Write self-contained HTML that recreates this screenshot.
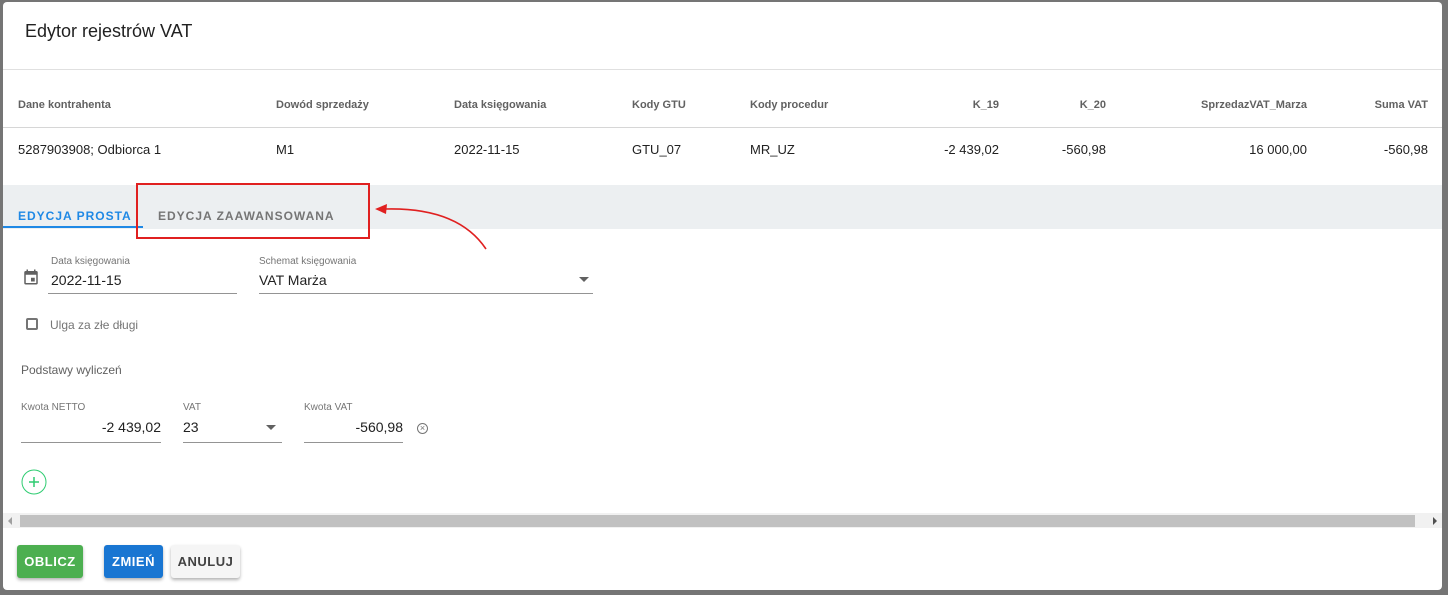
<!DOCTYPE html>
<html><head><meta charset="utf-8"><style>
*{box-sizing:border-box;margin:0;padding:0}
body{width:1448px;height:595px;background:#757575;font-family:"Liberation Sans",sans-serif;position:relative;overflow:hidden;color:#212121}
.box{position:absolute;left:3px;top:2px;width:1439px;height:588px;background:#fff;border-radius:4px;overflow:hidden}
.a{position:absolute;white-space:nowrap}
.h{font-size:11px;color:#616161;font-weight:bold;top:97px}
.d{font-size:13px;color:#212121;top:140px}
.r{text-align:right}
.lab{font-size:10px;color:#757575}
.btn{position:absolute;top:543px;height:33px;border-radius:3px;font-size:13px;font-weight:bold;letter-spacing:.5px;display:flex;align-items:center;justify-content:center;box-shadow:0 2px 3px rgba(0,0,0,.3)}
</style></head><body>
<div class="box">
<div class="a" style="left:22px;top:19px;font-size:18px;color:#212121">Edytor rejestrów VAT</div>
<div class="a" style="left:0;top:67px;width:1439px;height:1px;background:#e0e0e0"></div>
<div class="a h" style="left:15px">Dane kontrahenta</div>
<div class="a h" style="left:273px">Dowód sprzedaży</div>
<div class="a h" style="left:451px">Data księgowania</div>
<div class="a h" style="left:629px">Kody GTU</div>
<div class="a h" style="left:747px">Kody procedur</div>
<div class="a h r" style="right:443px">K_19</div>
<div class="a h r" style="right:336px">K_20</div>
<div class="a h r" style="right:135px">SprzedazVAT_Marza</div>
<div class="a h r" style="right:14px">Suma VAT</div>
<div class="a" style="left:0;top:125px;width:1439px;height:1px;background:#d6d6d6"></div>
<div class="a d" style="left:15px">5287903908; Odbiorca 1</div>
<div class="a d" style="left:273px">M1</div>
<div class="a d" style="left:451px">2022-11-15</div>
<div class="a d" style="left:629px">GTU_07</div>
<div class="a d" style="left:747px">MR_UZ</div>
<div class="a d r" style="right:443px">-2 439,02</div>
<div class="a d r" style="right:336px">-560,98</div>
<div class="a d r" style="right:135px">16 000,00</div>
<div class="a d r" style="right:14px">-560,98</div>
<div class="a" style="left:0;top:183px;width:1439px;height:44px;background:#eceff1"></div>
<div class="a" style="left:15px;top:207px;font-size:12px;font-weight:bold;letter-spacing:1px;color:#1e88e5">EDYCJA PROSTA</div>
<div class="a" style="left:0;top:224px;width:140px;height:2px;background:#1e88e5"></div>
<div class="a" style="left:155px;top:207px;font-size:12px;font-weight:bold;letter-spacing:1px;color:#757575">EDYCJA ZAAWANSOWANA</div>
<div class="a" style="left:133px;top:181px;width:234px;height:56px;border:2px solid #e02020"></div>
<svg class="a" style="left:360px;top:195px" width="140" height="60"><path d="M123 52 Q95 10 22 12" fill="none" stroke="#e02020" stroke-width="1.6"/><path d="M12 12 L24 7 L23 17 Z" fill="#e02020"/></svg>
<svg class="a" style="left:19px;top:266px" width="18" height="18" viewBox="0 0 24 24"><path fill="#616161" d="M19 4h-1V2h-2v2H8V2H6v2H5a2 2 0 0 0-2 2v14a2 2 0 0 0 2 2h14a2 2 0 0 0 2-2V6a2 2 0 0 0-2-2zm0 16H5V9h14zM12 13h5v5h-5z"/></svg>
<div class="a lab" style="left:48px;top:254px">Data księgowania</div>
<div class="a" style="left:48px;top:270px;font-size:14px">2022-11-15</div>
<div class="a" style="left:45px;top:291px;width:189px;height:1px;background:#949494"></div>
<div class="a lab" style="left:256px;top:254px">Schemat księgowania</div>
<div class="a" style="left:256px;top:270px;font-size:14px">VAT Marża</div>
<div class="a" style="left:576px;top:275px;border-left:5px solid transparent;border-right:5px solid transparent;border-top:5px solid #616161"></div>
<div class="a" style="left:256px;top:291px;width:334px;height:1px;background:#949494"></div>
<div class="a" style="left:23px;top:316px;width:12px;height:12px;border:2px solid #757575;border-radius:2px"></div>
<div class="a" style="left:47px;top:316px;font-size:12px;color:#757575">Ulga za złe długi</div>
<div class="a" style="left:18px;top:361px;font-size:12px;color:#616161">Podstawy wyliczeń</div>
<div class="a lab" style="left:18px;top:400px">Kwota NETTO</div>
<div class="a" style="left:18px;top:417px;width:140px;text-align:right;font-size:14px">-2 439,02</div>
<div class="a" style="left:18px;top:440px;width:140px;height:1px;background:#949494"></div>
<div class="a lab" style="left:180px;top:400px">VAT</div>
<div class="a" style="left:180px;top:417px;font-size:14px">23</div>
<div class="a" style="left:263px;top:423px;border-left:5px solid transparent;border-right:5px solid transparent;border-top:5px solid #616161"></div>
<div class="a" style="left:180px;top:440px;width:99px;height:1px;background:#949494"></div>
<div class="a lab" style="left:301px;top:400px">Kwota VAT</div>
<div class="a" style="left:301px;top:417px;width:99px;text-align:right;font-size:14px">-560,98</div>
<div class="a" style="left:301px;top:440px;width:99px;height:1px;background:#949494"></div>
<div class="a" style="left:414px;top:421px;width:11px;height:11px;border:1px solid #757575;border-radius:50%;font-size:9px;line-height:9px;text-align:center;color:#757575">×</div>
<svg class="a" style="left:18px;top:467px" width="26" height="26"><circle cx="13" cy="13" r="12" fill="none" stroke="#2ecc71" stroke-width="1"/><path d="M13 8v10M8 13h10" stroke="#2ecc71" stroke-width="1.5"/></svg>
<div class="a" style="left:0;top:511px;width:1439px;height:15px;background:#f1f1f1"></div>
<div class="a" style="left:17px;top:513px;width:1395px;height:12px;background:#c1c1c1"></div>
<div class="a" style="left:5px;top:515px;border-top:4px solid transparent;border-bottom:4px solid transparent;border-right:4px solid #a0a0a0"></div>
<div class="a" style="left:1430px;top:515px;border-top:4px solid transparent;border-bottom:4px solid transparent;border-left:4px solid #505050"></div>
<div class="btn" style="left:14px;width:66px;background:#4caf50;color:#fff">OBLICZ</div>
<div class="btn" style="left:101px;width:59px;background:#1976d2;color:#fff">ZMIEŃ</div>
<div class="btn" style="left:168px;width:69px;background:#f5f5f5;color:#424242">ANULUJ</div>
</div>
</body></html>
